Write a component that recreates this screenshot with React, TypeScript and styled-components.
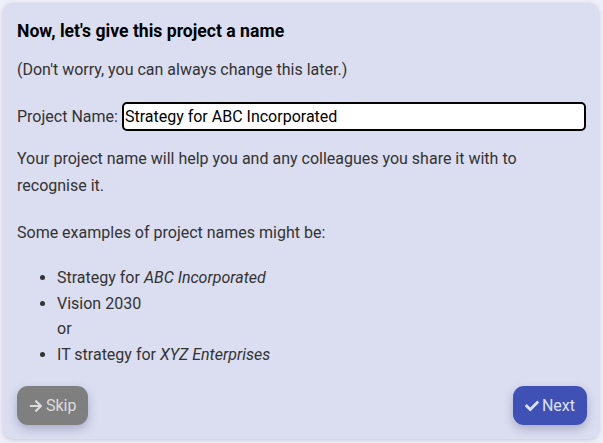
import React from "react";
import styled, { createGlobalStyle } from "styled-components";
import { FaArrowRight, FaCheck } from "react-icons/fa";

const Global = createGlobalStyle`
  html, body { margin: 0; padding: 0; background: #eeeff8; }
  body { font-family: Roboto, "Noto Sans", sans-serif; }
  * { box-sizing: border-box; }
`;

const Page = styled.div`
  width: 603px;
  height: 443px;
  padding: 3px 4px 4px 3px;
`;

const Card = styled.div`
  height: 100%;
  background: #dbddf0;
  border-radius: 10px;
  box-shadow: 0 1px 4px rgba(80, 80, 120, 0.25);
  padding: 18px 12px 14px 14px;
  display: flex;
  flex-direction: column;
  color: #333;
  font-size: 16px;
`;

const Title = styled.h2`
  margin: 0;
  font-size: 17.6px;
  font-weight: 700;
  color: #000;
  line-height: 20px;
`;

const Para = styled.p<{ $top: number }>`
  margin: ${(p) => p.$top}px 0 0 0;
  line-height: 27px;
`;

const NameRow = styled.div`
  margin-top: 19px;
  display: flex;
  align-items: center;
  gap: 4px;
  line-height: 20px;
`;

const NameInput = styled.input`
  flex: 1;
  height: 29px;
  margin-right: 1px;
  border: 2px solid #000;
  border-radius: 5px;
  background: #fff;
  font-family: Roboto, "Noto Sans", sans-serif;
  font-size: 16px;
  color: #000;
  padding: 0 1px;
  outline: none;
`;

const List = styled.ul`
  margin: 19px 0 0 0;
  padding-left: 40px;
  line-height: 25.5px;
`;

const Item = styled.li<{ $plain?: boolean }>`
  list-style: ${(p) => (p.$plain ? "none" : "disc")};
`;

const Footer = styled.div`
  margin-top: auto;
  display: flex;
  justify-content: space-between;
  align-items: center;
`;

const Button = styled.button<{ $variant: "skip" | "next" }>`
  height: 39px;
  border: none;
  border-radius: 11px;
  padding: 0 12px;
  display: flex;
  align-items: center;
  gap: 3px;
  font-family: Roboto, "Noto Sans", sans-serif;
  font-size: 16px;
  background: ${(p) => (p.$variant === "skip" ? "#7f7f7f" : "#3f51b5")};
  color: ${(p) => (p.$variant === "skip" ? "#dcdcdc" : "#dde0f4")};
  box-shadow: 0 4px 10px rgba(60, 60, 110, 0.3);
  svg { width: 14px; height: 14px; }
`;

export default function App() {
  return (
    <>
      <Global />
      <Page>
        <Card>
          <Title>Now, let's give this project a name</Title>
          <Para $top={15}>(Don't worry, you can always change this later.)</Para>
          <NameRow>
            <span>Project Name:</span>
            <NameInput defaultValue="Strategy for ABC Incorporated" />
          </NameRow>
          <Para $top={14}>
            Your project name will help you and any colleagues you share it with to recognise it.
          </Para>
          <Para $top={20}>Some examples of project names might be:</Para>
          <List>
            <Item>
              Strategy for <em>ABC Incorporated</em>
            </Item>
            <Item>Vision 2030</Item>
            <Item $plain>or</Item>
            <Item>
              IT strategy for <em>XYZ Enterprises</em>
            </Item>
          </List>
          <Footer>
            <Button $variant="skip">
              <FaArrowRight />
              Skip
            </Button>
            <Button $variant="next">
              <FaCheck />
              Next
            </Button>
          </Footer>
        </Card>
      </Page>
    </>
  );
}
